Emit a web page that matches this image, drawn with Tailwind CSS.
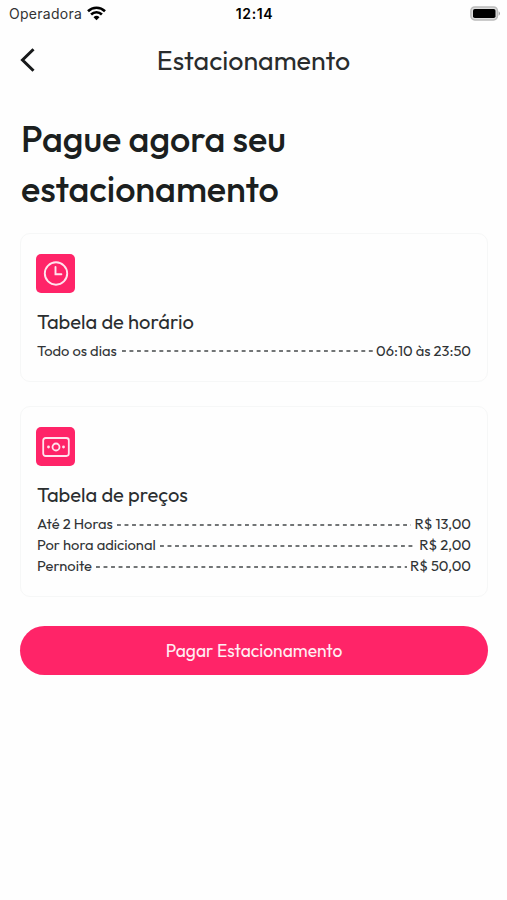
<!DOCTYPE html>
<html lang="pt-BR">
<head>
<meta charset="utf-8">
<meta name="viewport" content="width=device-width, initial-scale=1">
<title>Estacionamento</title>
<script src="https://cdn.jsdelivr.net/npm/@tailwindcss/browser@4"></script>
</head>
<body class="bg-[#fefefe] text-[#1b1f20] font-['Outfit','Lato',sans-serif] h-[900px] overflow-hidden">
<header>
  <div class="grid grid-cols-[1fr_auto_1fr] items-center h-7 pl-[9px] pr-[6px] font-['Inter',sans-serif] text-black">
    <div class="flex items-center gap-[5px]">
      <span class="text-[14px] leading-7 tracking-[0.27px] text-[#333]">Operadora</span>
      <svg class="w-[19px] h-[15px] -mt-[1px]" viewBox="0 0 19 15" fill="none" stroke="#000" stroke-width="2.6"><path d="M1 5.2a12.2 12.2 0 0 1 17 0"/><path d="M4.1 8.5a7.7 7.7 0 0 1 10.8 0"/><path d="M9.5 14.2 6.5 11.2a4.3 4.3 0 0 1 6 0z" fill="#000" stroke="none"/></svg>
    </div>
    <span class="text-[14px] leading-7 font-semibold tracking-[0.65px] -ml-px">12:14</span>
    <svg class="w-[31px] h-[15px] justify-self-end -mt-[1px]" viewBox="0 0 31 15"><rect x="0.9" y="0.9" width="26.5" height="13" rx="3.8" fill="#ddd" stroke="#bbb" stroke-width="1.5"/><rect x="3" y="3" width="22.5" height="9" rx="1.8" fill="#000"/><path d="M28.7 5.2q2.4 2.2 0 4.6z" fill="#999"/></svg>
  </div>
  <div class="grid grid-cols-[1fr_auto_1fr] items-center h-16 px-5">
    <svg class="w-4 h-6" viewBox="0 0 16 24" fill="none" stroke="#17191a" stroke-width="3"><path d="M13.5 1.2 2.5 12l11 10.8"/></svg>
    <h1 class="text-[26.8px] leading-16 text-[#292c2d]">Estacionamento</h1>
  </div>
</header>
<main class="pl-5 pr-[19px] pt-[22px]">
  <h2 class="text-[36px] leading-[50px] font-medium h-[119px] pl-px">Pague agora seu<br><span class="tracking-[-0.08px]">estacionamento</span></h2>
  <section class="h-[149px] border-[1.5px] border-[#f6f7f7] rounded-[10px] px-[15px] pt-[20px]">
    <div class="size-[39px] rounded-[5px] bg-[#ff2468] flex items-center justify-center">
      <svg class="size-[26px]" viewBox="0 0 26 26" fill="none" stroke="#ffe4ed" stroke-width="1.9"><circle cx="13" cy="12.5" r="11.2"/><path d="M12.5 6v7.2h5.9" stroke-linecap="round"/></svg>
    </div>
    <h3 class="text-[20.1px] leading-7 mt-[15px] pl-px text-[#2b2e30]">Tabela de horário</h3>
    <div class="flex items-center h-[21px] mt-[5px] text-[14.7px] pl-px text-[#303335]">
      <span class="w-[85px] whitespace-nowrap">Todo os dias</span>
      <svg class="flex-1 min-w-0 h-[2px] -mt-px"><path d="M0 1h600" stroke="#44484a" stroke-width="1.5" stroke-dasharray="3.9 3.58"/></svg>
      <span class="w-[99px] text-right whitespace-nowrap -mr-px pr-[2px]">06:10 às 23:50</span>
    </div>
  </section>
  <section class="mt-[24px] h-[191px] border-[1.5px] border-[#f6f7f7] rounded-[10px] px-[15px] pt-[20px]">
    <div class="size-[39px] rounded-[5px] bg-[#ff2468] flex items-center justify-center">
      <svg class="w-7 h-5" viewBox="0 0 28 20" fill="none" stroke="#ffe4ed" stroke-width="1.8"><rect x="1.2" y="1" width="25.6" height="18" rx="2.4"/><circle cx="14" cy="10" r="3.5"/><path d="M6.5 10h.01M21.5 10h.01" stroke-width="2.8" stroke-linecap="round"/></svg>
    </div>
    <h3 class="text-[20.1px] leading-7 mt-[15px] pl-px text-[#2b2e30]">Tabela de preços</h3>
    <div class="mt-[5px] text-[14.7px] pl-px text-[#303335]">
      <div class="flex items-center h-[21px]">
        <span class="w-[80px] whitespace-nowrap">Até 2 Horas</span>
        <svg class="flex-1 min-w-0 h-[2px]"><path d="M0 1h600" stroke="#44484a" stroke-width="1.5" stroke-dasharray="3.9 3.63"/></svg>
        <span class="w-[61px] text-right whitespace-nowrap pr-px">R$ 13,00</span>
      </div>
      <div class="flex items-center h-[21px]">
        <span class="w-[123px] whitespace-nowrap">Por hora adicional</span>
        <svg class="flex-1 min-w-0 h-[2px]"><path d="M0 1h600" stroke="#44484a" stroke-width="1.5" stroke-dasharray="3.9 3.63"/></svg>
        <span class="w-[56px] text-right whitespace-nowrap pr-px">R$ 2,00</span>
      </div>
      <div class="flex items-center h-[21px]">
        <span class="w-[59px] whitespace-nowrap">Pernoite</span>
        <svg class="flex-1 min-w-0 h-[2px]"><path d="M0 1h600" stroke="#44484a" stroke-width="1.5" stroke-dasharray="3.9 3.63"/></svg>
        <span class="w-[65px] text-right whitespace-nowrap pr-px">R$ 50,00</span>
      </div>
    </div>
  </section>
  <button class="block w-full mt-[29px] h-[49px] pt-px rounded-full bg-[#ff2468] text-[#ffeef3] text-[17.4px]">Pagar Estacionamento</button>
</main>
</body>
</html>
